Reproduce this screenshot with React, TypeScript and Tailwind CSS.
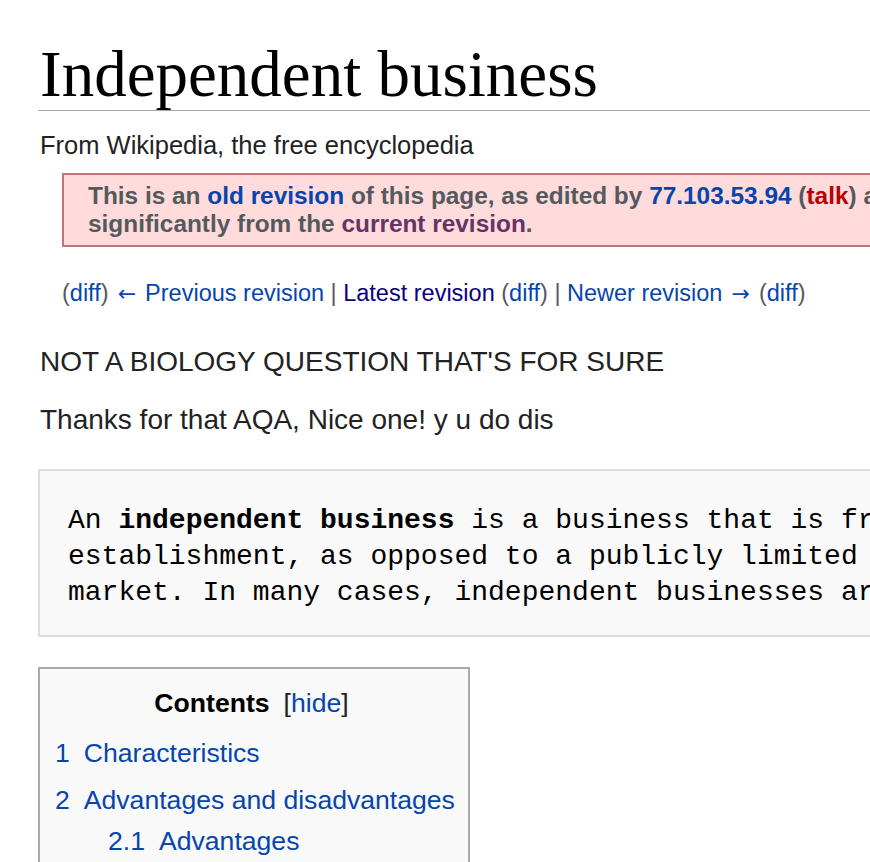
import React from "react";

const link = "text-[#0645ad]";
const arrow = "font-['DejaVu_Sans',sans-serif] text-[22px] px-[2.5px]";

export default function App() {
  return (
    <div className="w-[870px] h-[862px] overflow-hidden bg-white text-[#222] font-['Liberation_Sans',Arial,sans-serif]">
      <div className="pl-[38px] pt-[38px]">
        {/* heading */}
        <h1 className="font-['Liberation_Serif','Times_New_Roman',serif] text-[65px] leading-[72px] text-black border-b border-[#a2a9b1] pl-[2px]">
          Independent business
        </h1>
        <div className="pl-[2px] mt-[19px] text-[25.5px] leading-[30px]">From Wikipedia, the free encyclopedia</div>

        {/* old revision notice */}
        <div className="ml-[24px] mt-[13px] w-[900px] bg-[#ffdbdb] border-2 border-[#c07474] pl-[24px] pt-[7px] pb-[7px] text-[24.4px] leading-[28px] font-bold text-[#54595d] whitespace-nowrap">
          <div>
            This is an <span className={link}>old revision</span> of this page, as edited by{" "}
            <span className={link}>77.103.53.94</span> (<span className="text-[#ba0000]">talk</span>) at 16:42, 14 May 2017
          </div>
          <div>
            significantly from the <span className="text-[#663366]">current revision</span>.
          </div>
        </div>

        {/* revision nav */}
        <div className="ml-[24px] mt-[32px] text-[23.5px] leading-[28px] text-[#54595d] whitespace-nowrap">
          (<span className={link}>diff</span>){" "}
          <span className={link}>
            <span className={arrow}>←</span> Previous revision
          </span>{" "}
          |{" "}
          <span className="text-[#0b0080]">Latest revision</span> (<span className={link}>diff</span>) |{" "}
          <span className={link}>
            Newer revision <span className={arrow}>→</span>
          </span>{" "}
          (<span className={link}>diff</span>)
        </div>

        <p className="pl-[2px] mt-[38px] text-[28px] leading-[32px]">NOT A BIOLOGY QUESTION THAT'S FOR SURE</p>
        <p className="pl-[2px] mt-[26px] text-[28px] leading-[32px]">Thanks for that AQA, Nice one! y u do dis</p>

        {/* pre block */}
        <pre className="mt-[33px] w-[900px] bg-[#f9f9f9] border-2 border-[#dddddd] pl-[28px] pt-[32px] pb-[24px] font-['Liberation_Mono','Courier_New',monospace] text-[28px] leading-[36px] text-black whitespace-pre">
          {"An "}
          <b>independent business</b>
          {" is a business that is free from outside control\nestablishment, as opposed to a publicly limited company\nmarket. In many cases, independent businesses are"}
        </pre>

        {/* TOC */}
        <div className="mt-[30px] w-[432px] bg-[#f9f9f9] border-2 border-[#aaaaaa] pl-[15px] pt-[16px] pb-[20px] text-[26.6px] whitespace-nowrap">
          <div className="text-center leading-[36px] pr-[20px]">
            <span className="font-bold text-black">Contents</span>
            <span className="ml-[14px] text-[#222]">
              [<span className={link}>hide</span>]
            </span>
          </div>
          <ul className="mt-[16px] leading-[32px]">
            <li className="flex gap-[14px] mb-[15px]">
              <span className={link}>1</span>
              <span className={link}>Characteristics</span>
            </li>
            <li className="mb-[9px]">
              <div className="flex gap-[14px]">
                <span className={link}>2</span>
                <span className={link}>Advantages and disadvantages</span>
              </div>
            </li>
            <li className="flex gap-[14px] pl-[53px]">
              <span className={link}>2.1</span>
              <span className={link}>Advantages</span>
            </li>
          </ul>
        </div>
      </div>
    </div>
  );
}
